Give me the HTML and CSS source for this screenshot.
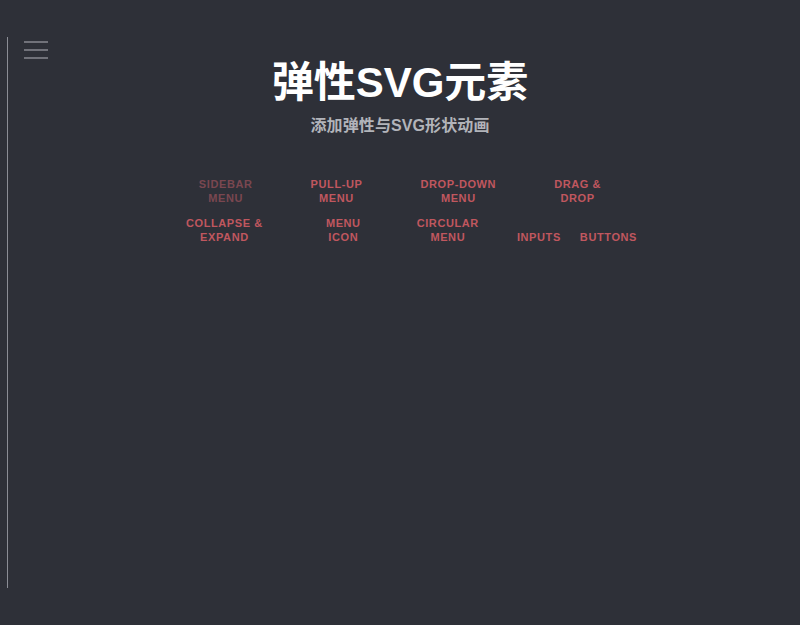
FILE: index.html
```html
<!DOCTYPE html>
<html lang="zh-CN">
<head>
<meta charset="utf-8">
<title>弹性SVG元素</title>
<link rel="stylesheet" href="styles.css">
</head>
<body>
<div class="sidebar-edge"></div>
<button class="menu-btn" aria-label="menu">
  <svg width="24" height="18" viewBox="0 0 24 18">
    <line x1="0" y1="1" x2="24" y2="1"/>
    <line x1="0" y1="9" x2="24" y2="9"/>
    <line x1="0" y1="17" x2="24" y2="17"/>
  </svg>
</button>
<header class="header">
  <h1 class="title">弹性SVG元素</h1>
  <p class="subtitle">添加弹性与SVG形状动画</p>
  <nav class="demos">
    <div class="row row-top">
      <a class="demo current" href="#">Sidebar<br>Menu</a>
      <a class="demo" href="#">Pull-up<br>Menu</a>
      <a class="demo" href="#">Drop-down<br>Menu</a>
      <a class="demo" href="#">Drag &amp;<br>Drop</a>
    </div>
    <div class="row row-bottom">
      <a class="demo d-collapse" href="#">Collapse &amp;<br>Expand</a>
      <a class="demo d-icon" href="#">Menu<br>Icon</a>
      <a class="demo d-circular" href="#">Circular<br>Menu</a>
      <a class="demo d-inputs" href="#">Inputs</a>
      <a class="demo" href="#">Buttons</a>
    </div>
  </nav>
</header>
</body>
</html>
```
FILE: styles.css
```css
html, body {
  margin: 0;
  padding: 0;
  height: 100%;
}
body {
  background: #2e3038;
  font-family: "Liberation Sans", "Noto Sans CJK SC", Arial, sans-serif;
  color: #fff;
  position: relative;
  overflow: hidden;
}
.sidebar-edge {
  position: absolute;
  left: 7px;
  top: 37px;
  width: 1px;
  height: 551px;
  background: #8b8d95;
}
.menu-btn {
  position: absolute;
  left: 24px;
  top: 41px;
  padding: 0;
  border: 0;
  background: none;
  display: block;
  line-height: 0;
}
.menu-btn line {
  stroke: #8e9097;
  stroke-width: 1.4;
}
.header {
  padding-top: 62px;
  text-align: center;
}
.title {
  margin: 0;
  font-size: 42px;
  line-height: 42px;
  font-weight: bold;
  color: #fff;
}
.subtitle {
  margin: 12px 0 0;
  font-size: 16px;
  line-height: 20px;
  font-weight: bold;
  letter-spacing: 0.1px;
  color: #b2b4ba;
}
.demos {
  margin-top: 42px;
  display: flex;
  flex-direction: column;
  gap: 12px;
}
.row {
  display: flex;
  justify-content: center;
  align-items: flex-end;
}
.row-top {
  gap: 58px;
}
.row-bottom {
  padding-left: 23px;
}
.demo {
  display: block;
  font-size: 11px;
  line-height: 13.5px;
  font-weight: bold;
  letter-spacing: 0.6px;
  text-transform: uppercase;
  text-decoration: none;
  text-align: center;
  color: #c0575f;
}
.demo.current {
  color: #7a4750;
}
.d-collapse { margin-right: 63px; }
.d-icon { margin-right: 56px; }
.d-circular { margin-right: 38px; }
.d-inputs { margin-right: 19px; }
```
